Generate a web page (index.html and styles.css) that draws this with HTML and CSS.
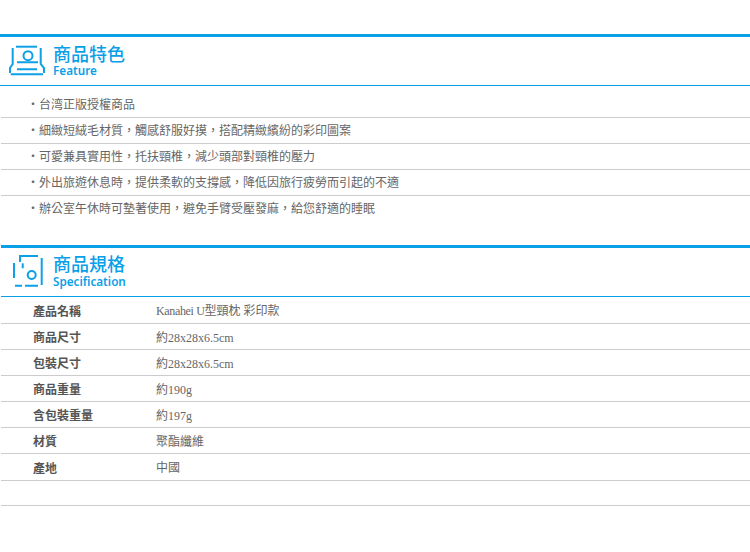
FILE: index.html
```html
<!DOCTYPE html>
<html lang="zh-Hant">
<head>
<meta charset="utf-8">
<title>商品特色</title>
<link rel="stylesheet" href="styles.css">
</head>
<body>
<section class="feature">
  <header class="head">
    <svg class="icon" width="38" height="32" viewBox="0 0 38 32" fill="none" stroke="#0ea0e6" stroke-width="2">
      <path d="M7 1.7H28"/>
      <path d="M3.7 3V19L1 23V28M31.7 3V19L35 23V28"/>
      <circle cx="19" cy="10.7" r="4.5"/>
      <path d="M8 17.3H29M8 24.3H28M1.7 29.3H34"/>
    </svg>
    <div class="titles">
      <h2 class="title">商品特色</h2>
      <p class="sub">Feature</p>
    </div>
  </header>
  <ul class="list">
    <li>‧台湾正版授權商品</li>
    <li>‧細緻短絨毛材質，觸感舒服好摸，搭配精緻繽紛的彩印圖案</li>
    <li>‧可愛兼具實用性，托扶頸椎，減少頭部對頸椎的壓力</li>
    <li>‧外出旅遊休息時，提供柔軟的支撐感，降低因旅行疲勞而引起的不適</li>
    <li>‧辦公室午休時可墊著使用，避免手臂受壓發麻，給您舒適的睡眠</li>
  </ul>
</section>
<section class="spec">
  <header class="head head-spec">
    <svg class="icon" width="38" height="34" viewBox="0 0 38 34" fill="none" stroke="#0ea0e6" stroke-width="2">
      <path d="M10 1H29"/>
      <path d="M32.7 3V30"/>
      <path d="M11 1V7"/>
      <path d="M5 8V23"/>
      <path d="M13.7 8.300V13.300"/>
      <path d="M6 30.700H13M16 30.700H29"/>
      <circle cx="22.700" cy="20" r="4"/>
    </svg>
    <div class="titles">
      <h2 class="title">商品規格</h2>
      <p class="sub">Specification</p>
    </div>
  </header>
  <dl class="table">
    <div class="row"><dt>產品名稱</dt><dd><span class="latin">Kanahei U</span>型頸枕 彩印款</dd></div>
    <div class="row"><dt>商品尺寸</dt><dd>約28x28x6.5cm</dd></div>
    <div class="row"><dt>包裝尺寸</dt><dd>約28x28x6.5cm</dd></div>
    <div class="row"><dt>商品重量</dt><dd>約190g</dd></div>
    <div class="row"><dt>含包裝重量</dt><dd>約197g</dd></div>
    <div class="row"><dt>材質</dt><dd>聚酯纖維</dd></div>
    <div class="row"><dt>產地</dt><dd>中國</dd></div>
    <div class="row"><dt></dt><dd></dd></div>
  </dl>
</section>
</body>
</html>
```
FILE: styles.css
```css
* { box-sizing: border-box; }
html, body { margin: 0; padding: 0; background: #fff; }
body {
  width: 750px;
  height: 552px;
  overflow: hidden;
  padding-top: 34px;
  font-family: "Noto Sans CJK TC", sans-serif;
  font-size: 12px;
  color: #666;
}
.head {
  display: flex;
  align-items: center;
  gap: 6px;
  height: 52px;
  padding-left: 9px;
  padding-bottom: 3px;
  border-top: 3px solid #0aa0e8;
  border-bottom: 1px solid #0aa0e8;
}
.head-spec {
  margin-left: 1px;
  padding-left: 8px;
  padding-bottom: 5px;
}
.head .icon { margin-bottom: -3px; }
.head-spec .icon { margin-bottom: -5px; }
.titles { display: flex; flex-direction: column; }
.title {
  margin: 0;
  font-size: 18px;
  line-height: 22px;
  font-weight: 500;
  color: #0aa0e8;
}
.head-spec .title { margin-bottom: 1px; }
.sub {
  margin: -1px 0 0;
  font-family: "Noto Sans", sans-serif;
  font-size: 11.7px;
  line-height: 14px;
  font-weight: 600;
  color: #0aa0e8;
}
.list {
  list-style: none;
  margin: 0 0 0 1px;
  padding: 6px 0 0;
  height: 159px;
}
.list li {
  height: 26px;
  line-height: 24px;
  padding-left: 26px;
  border-bottom: 1px solid #ccc;
}
.list li:last-child { border-bottom: 0; }
.table { margin: 0 0 0 1px; }
.row {
  display: flex;
  align-items: center;
  height: 26px;
  border-bottom: 1px solid #ccc;
}
.row:first-child { height: 27px; }
.row:nth-child(7) { height: 27px; }
.row:nth-child(8) { height: 25px; }
.row dt {
  width: 123px;
  padding-left: 32px;
  font-weight: 700;
  color: #555;
}
.row dd {
  margin: 0;
  padding-left: 32px;
  font-family: "Liberation Serif", "Noto Sans CJK TC", serif;
  color: #666;
}
.latin { letter-spacing: -0.35px; }
```
